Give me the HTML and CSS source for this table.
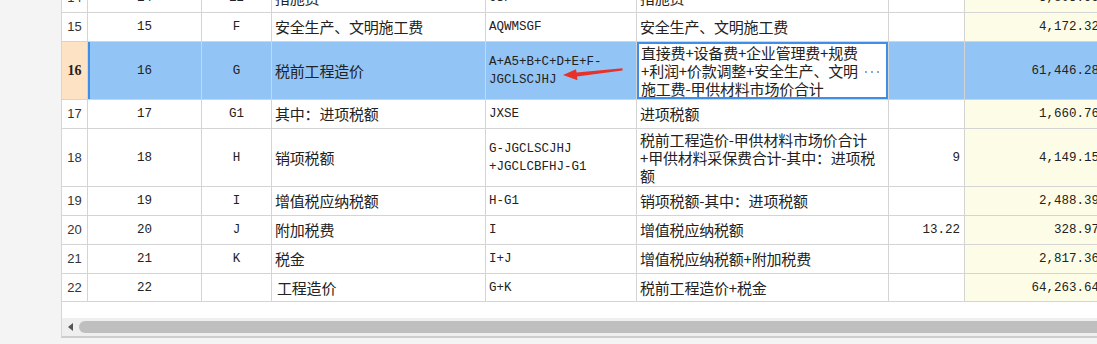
FILE: index.html
```html
<!DOCTYPE html>
<html lang="zh-CN">
<head>
<meta charset="utf-8">
<title>费用汇总</title>
<link rel="stylesheet" href="styles.css">
</head>
<body>
<div class="sheet">
  <div class="grid">
    <div class="row">
      <div class="c n">14</div><div class="c m">14</div><div class="c m">E2</div><div class="c t">措施费</div><div class="c code">CSF</div><div class="c t">措施费</div><div class="c num"></div><div class="c amt">3,803.99</div>
    </div>
    <div class="row">
      <div class="c n">15</div><div class="c m">15</div><div class="c m">F</div><div class="c t">安全生产、文明施工费</div><div class="c code">AQWMSGF</div><div class="c t">安全生产、文明施工费</div><div class="c num"></div><div class="c amt">4,172.32</div>
    </div>
    <div class="row tall sel">
      <div class="c n head">16</div><div class="c m first">16</div><div class="c m">G</div><div class="c t">税前工程造价</div><div class="c code">A+A5+B+C+D+E+F-<br>JGCLSCJHJ</div><div class="c t edit"><span class="txt">直接费+设备费+企业管理费+规费<br>+利润+价款调整+安全生产、文明<br>施工费-甲供材料市场价合计</span><svg class="dots" width="16" height="4" viewBox="0 0 16 4"><circle cx="2" cy="2" r="1.1"/><circle cx="8" cy="2" r="1.1"/><circle cx="14" cy="2" r="1.1"/></svg></div><div class="c num"></div><div class="c amt">61,446.28</div>
    </div>
    <div class="row">
      <div class="c n">17</div><div class="c m">17</div><div class="c m">G1</div><div class="c t">其中：进项税额</div><div class="c code">JXSE</div><div class="c t">进项税额</div><div class="c num"></div><div class="c amt">1,660.76</div>
    </div>
    <div class="row tall">
      <div class="c n">18</div><div class="c m">18</div><div class="c m">H</div><div class="c t">销项税额</div><div class="c code">G-JGCLSCJHJ<br>+JGCLCBFHJ-G1</div><div class="c t">税前工程造价-甲供材料市场价合计<br>+甲供材料采保费合计-其中：进项税<br>额</div><div class="c num">9</div><div class="c amt">4,149.15</div>
    </div>
    <div class="row">
      <div class="c n">19</div><div class="c m">19</div><div class="c m">I</div><div class="c t">增值税应纳税额</div><div class="c code">H-G1</div><div class="c t">销项税额-其中：进项税额</div><div class="c num"></div><div class="c amt">2,488.39</div>
    </div>
    <div class="row">
      <div class="c n">20</div><div class="c m">20</div><div class="c m">J</div><div class="c t">附加税费</div><div class="c code">I</div><div class="c t">增值税应纳税额</div><div class="c num">13.22</div><div class="c amt">328.97</div>
    </div>
    <div class="row">
      <div class="c n">21</div><div class="c m">21</div><div class="c m">K</div><div class="c t">税金</div><div class="c code">I+J</div><div class="c t">增值税应纳税额+附加税费</div><div class="c num"></div><div class="c amt">2,817.36</div>
    </div>
    <div class="row last">
      <div class="c n">22</div><div class="c m">22</div><div class="c m"></div><div class="c t indent">工程造价</div><div class="c code">G+K</div><div class="c t">税前工程造价+税金</div><div class="c num"></div><div class="c amt">64,263.64</div>
    </div>
  </div>
  <div class="blank"></div>
  <div class="hscroll">
    <span class="arrow-left"></span>
    <span class="thumb"></span>
  </div>
</div>
<svg class="annot" width="1097" height="344" viewBox="0 0 1097 344">
  <polygon points="563,75 576,69.3 576.5,72.6 622.5,68.2 622.5,70.6 577,76.6 577.5,80.2" fill="#e8312a"/>
</svg>
</body>
</html>
```
FILE: styles.css
```css
html, body {
  margin: 0;
  padding: 0;
}
body {
  width: 1097px;
  height: 344px;
  overflow: hidden;
  position: relative;
  background: #f4f4f4;
  font-family: "Noto Sans CJK SC", "Liberation Sans", sans-serif;
  color: #222;
}
.sheet {
  margin-left: 61px;
  width: 1044px;
  background: #fff;
  border-left: 1px solid #d6d6d6;
  border-bottom: 2px solid #cdcdcd;
  overflow: hidden;
}
.grid {
  margin-top: -16px;
}
.row {
  display: grid;
  grid-template-columns: 26px 114px 70px 214px 151px 252px 76px 140px;
  height: 29px;
}
.row.tall {
  height: 58px;
}
.row.last {
  height: 28px;
}
.c {
  box-sizing: border-box;
  border-right: 1px solid #d4d4d4;
  border-bottom: 1px solid #d4d4d4;
  display: flex;
  align-items: center;
  padding: 0 3px;
  white-space: nowrap;
  overflow: hidden;
  line-height: 18px;
}
.n {
  justify-content: center;
  padding: 0;
  font-family: "Liberation Sans", sans-serif;
  font-size: 13px;
  color: #333;
}
.m {
  justify-content: center;
  font-family: "Liberation Mono", monospace;
  font-size: 12.5px;
}
.t {
  font-size: 15px;
  letter-spacing: -0.2px;
}
.t.indent {
  padding-left: 5px;
}
.code {
  font-family: "Liberation Mono", monospace;
  font-size: 12.5px;
}
.num {
  justify-content: flex-end;
  padding-right: 4px;
  font-family: "Liberation Mono", monospace;
  font-size: 12.5px;
}
.amt {
  justify-content: flex-end;
  padding-right: 5px;
  background: #fdfde7;
  font-family: "Liberation Mono", monospace;
  font-size: 12.5px;
}
.sel .c {
  background: #92c5f5;
}
.sel .c.head {
  background: #fde3c4;
  font-family: "Liberation Serif", serif;
  font-weight: bold;
  font-size: 14px;
  color: #222;
}
.sel .c.first {
  box-shadow: inset 2px 0 0 #3d8ee8;
}
.sel .c.edit {
  background: #fff;
  box-shadow: inset 0 0 0 2px #3f8fe9;
  padding-left: 4px;
}
.edit .txt {
  flex: 1;
}
.dots {
  fill: #5f9bd6;
  margin-right: 5px;
  margin-top: 2px;
}
.blank {
  height: 16px;
}
.hscroll {
  height: 18px;
  background: #efefef;
  display: flex;
  align-items: center;
  gap: 6px;
  padding-left: 6px;
}
.arrow-left {
  width: 0;
  height: 0;
  border-top: 4px solid transparent;
  border-bottom: 4px solid transparent;
  border-right: 5px solid #555;
}
.thumb {
  flex: 1;
  height: 12px;
  border-radius: 6px 0 0 6px;
  background: #bfbfbf;
}
.annot {
  position: absolute;
  left: 0;
  top: 0;
  pointer-events: none;
}
```
